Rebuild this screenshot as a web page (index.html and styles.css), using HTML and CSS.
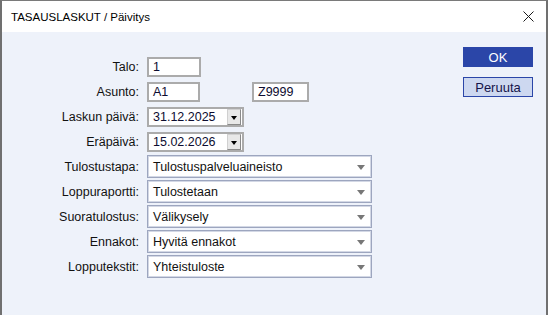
FILE: index.html
```html
<!DOCTYPE html>
<html lang="fi">

<head>
    <meta charset="UTF-8">
    <title>TASAUSLASKUT / Päivitys</title>
    <link rel="stylesheet" href="styles.css">
</head>

<body>
    <div class="window">
        <!-- Title bar -->
        <div class="titlebar">
            <span class="title">TASAUSLASKUT / Päivitys</span>
            <svg class="close" width="11" height="11" viewBox="0 0 11 11">
                <path d="M0.5 0.5 L10.5 10.5 M10.5 0.5 L0.5 10.5" stroke="#1a1a1a" stroke-width="1" fill="none" />
            </svg>
        </div>

        <div class="content">
            <form class="form">
                <label>Talo:</label>
                <div class="field"><span class="box w-talo">1</span></div>

                <label>Asunto:</label>
                <div class="field">
                    <span class="box w-asunto">A1</span>
                    <span class="box w-z">Z9999</span>
                </div>

                <label>Laskun päivä:</label>
                <div class="field">
                    <span class="box date">31.12.2025<span class="date-btn"></span></span>
                </div>

                <label>Eräpäivä:</label>
                <div class="field">
                    <span class="box date">15.02.2026<span class="date-btn"></span></span>
                </div>

                <label>Tulostustapa:</label>
                <div class="field"><span class="select">Tulostuspalveluaineisto<span class="arrow"></span></span></div>

                <label>Loppuraportti:</label>
                <div class="field"><span class="select">Tulostetaan<span class="arrow"></span></span></div>

                <label>Suoratulostus:</label>
                <div class="field"><span class="select">Välikysely<span class="arrow"></span></span></div>

                <label>Ennakot:</label>
                <div class="field"><span class="select">Hyvitä ennakot<span class="arrow"></span></span></div>

                <label>Lopputekstit:</label>
                <div class="field"><span class="select">Yhteistuloste<span class="arrow"></span></span></div>
            </form>

            <div class="actions">
                <button type="button" class="btn-ok">OK</button>
                <button type="button" class="btn-cancel">Peruuta</button>
            </div>
        </div>
    </div>
</body>

</html>
```

FILE: styles.css
```css
/* Reset */
* {
    margin: 0;
    padding: 0;
    box-sizing: border-box;
}

html,
body {
    width: 548px;
    height: 315px;
    overflow: hidden;
    font-family: 'Liberation Sans', Arial, sans-serif;
    background-color: #fff;
    color: #111;
}

/* Dialog window */
.window {
    height: 315px;
    display: flex;
    flex-direction: column;
    border-top: 1px solid #7a7a7a;
    border-left: 2px solid #707070;
    border-right: 2px solid #707070;
}

.titlebar {
    height: 31px;
    display: flex;
    align-items: center;
    justify-content: space-between;
    padding: 0 12px 0 9px;
    background-color: #fff;
}

.title {
    font-size: 11.5px;
    color: #000;
}

.close {
    display: block;
}

/* Dialog body */
.content {
    flex: 1;
    display: flex;
    justify-content: space-between;
    align-items: flex-start;
    background-color: #eef2fa;
    padding: 15px 13px 0 0;
}

.form {
    display: grid;
    grid-template-columns: 100px auto;
    grid-auto-rows: 25px;
    column-gap: 8px;
    align-items: center;
    margin: 7px 0 0 37px;
    font-size: 12.5px;
}

.form label {
    text-align: right;
    white-space: nowrap;
    color: #111;
}

.field {
    display: flex;
    align-items: center;
}

/* Text boxes */
.box {
    height: 20px;
    display: flex;
    align-items: center;
    padding-left: 4px;
    background-color: #fff;
    border: 2px solid #ababab;
    color: #0c0c30;
}

.w-talo {
    width: 54px;
}

.w-asunto {
    width: 53px;
}

.w-z {
    width: 57px;
    margin-left: 52px;
}

/* Date pickers */
.date {
    width: 97px;
    position: relative;
}

.date-btn {
    position: absolute;
    right: 1px;
    top: 0;
    width: 14px;
    height: 16px;
    background-color: #e8e8e8;
    border: 1px solid #d0d0d0;
    border-right-color: #8a8a8a;
    border-bottom-color: #8a8a8a;
}

.date-btn::after {
    content: '';
    position: absolute;
    left: 3px;
    top: 6px;
    border-left: 3.5px solid transparent;
    border-right: 3.5px solid transparent;
    border-top: 4px solid #000;
}

/* Drop-down lists */
.select {
    width: 225px;
    height: 23px;
    display: flex;
    align-items: center;
    padding-left: 5px;
    background-color: #fff;
    border: 1px solid #9da6bf;
    box-shadow: inset 0 0 0 1px #d3d8e5;
    position: relative;
}

.arrow {
    position: absolute;
    right: 6px;
    top: 9px;
    border-left: 4.5px solid transparent;
    border-right: 4.5px solid transparent;
    border-top: 5px solid #777;
}

/* Buttons */
.actions {
    display: flex;
    flex-direction: column;
    gap: 10px;
}

.actions button {
    width: 70px;
    height: 20px;
    font-family: 'Liberation Sans', Arial, sans-serif;
    font-size: 13px;
    cursor: pointer;
}

.btn-ok {
    background-color: #2b46a8;
    border: 1px solid #2b46a8;
    color: #fff;
}

.btn-cancel {
    background-color: #cdd8f0;
    border: 1px solid #2b46a8;
    color: #15154a;
}
```
